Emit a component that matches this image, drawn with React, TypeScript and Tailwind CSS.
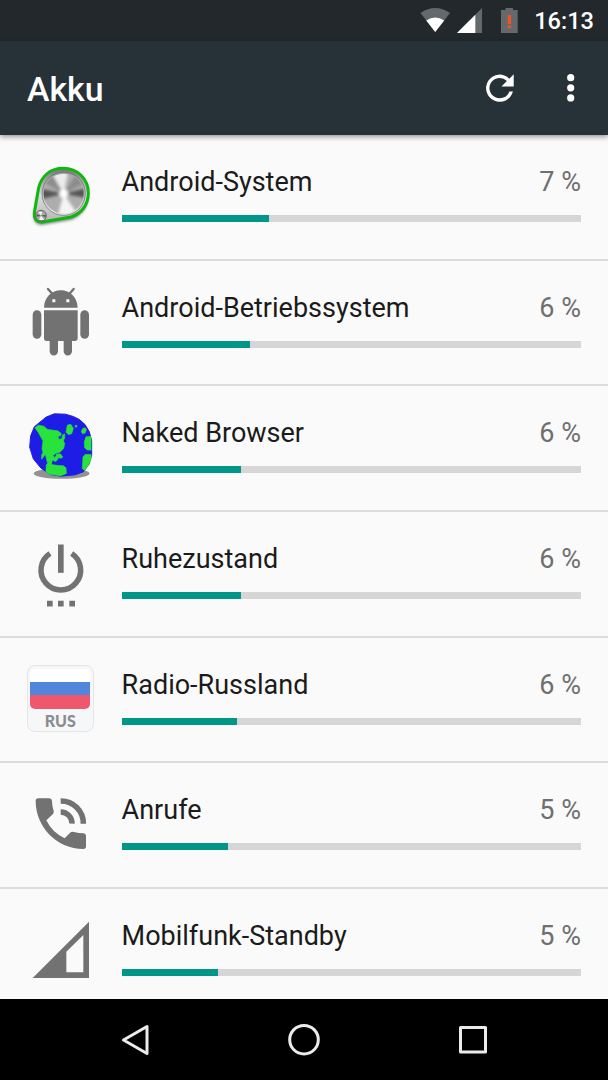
import type { ReactNode } from "react";

const ICON_GRAY = "#727272";

function ChargeIcon() {
    return (
        <svg viewBox="21 36 204 204" className="h-[68px] w-[68px] overflow-visible">
            <defs>
                <filter id="knobShadow" x="-20%" y="-20%" width="140%" height="150%">
                    <feGaussianBlur stdDeviation="5" />
                </filter>
                <filter id="soften" x="-20%" y="-20%" width="140%" height="140%">
                    <feGaussianBlur stdDeviation="4" />
                </filter>
                <clipPath id="knobClip">
                    <circle cx="131" cy="131" r="60" />
                </clipPath>
                <linearGradient id="plate" x1="0" y1="0" x2="0" y2="1">
                    <stop offset="0" stopColor="#777" />
                    <stop offset="0.5" stopColor="#ddd" />
                    <stop offset="1" stopColor="#b5b5b5" />
                </linearGradient>
                <linearGradient id="rim" x1="0" y1="0" x2="0" y2="1">
                    <stop offset="0" stopColor="#999" />
                    <stop offset="0.5" stopColor="#bbb" />
                    <stop offset="1" stopColor="#eee" />
                </linearGradient>
            </defs>
            <path d="M56 113C66 77 92 55 129 55C174 55 205 88 205 129C205 165 184 191 153 201L66 216C48 216 41 204 43 188Z" fill="#444" opacity="0.75" transform="translate(-1 8)" filter="url(#knobShadow)" />
            <path d="M56 113C66 77 92 55 129 55C174 55 205 88 205 129C205 165 184 191 153 201L66 216C48 216 41 204 43 188Z" fill="url(#plate)" stroke="#0fb80f" strokeWidth="9" />
            <circle cx="131" cy="131" r="65" fill="url(#rim)" stroke="#666" strokeWidth="2" />
            <circle cx="131" cy="131" r="60" fill="#adadad" />
            <g clipPath="url(#knobClip)">
                <g filter="url(#soften)">
                    <path d="M131 131L60 90L90 66ZM131 131L172 66L200 96Z" fill="#8c8c8c" />
                    <path d="M131 131L92 62L146 60Z" fill="#ececec" />
                    <path d="M131 131L112 200H178Z" fill="#f4f4f4" />
                    <path d="M131 131L200 114V144ZM131 131L62 116V148Z" fill="#555" />
                    <circle cx="131" cy="131" r="13" fill="#fff" />
                </g>
            </g>
            <circle cx="63" cy="197" r="16" fill="#aaa" stroke="#666" strokeWidth="3" />
            <path d="M63 197L54 185H67ZM63 197L57 210H73Z" fill="#fff" opacity="0.85" />
            <path d="M63 197L50 193V200ZM63 197L77 194V201Z" fill="#333" opacity="0.7" />
        </svg>
    );
}

function RobotIcon() {
    return (
        <svg viewBox="21 23 204 204" className="h-[68px] w-[68px] overflow-visible" fill={ICON_GRAY}>
            <path d="M84 26L98 42M161 26L147 42" stroke={ICON_GRAY} strokeWidth="7" strokeLinecap="round" />
            <path fillRule="evenodd" d="M72 82C73 50 95 30 122.500 30C150 30 172 50 173 82ZM97 57V66H106V57ZM139 57V66H148V57Z" />
            <path d="M72 90H173V174Q173 182 165 182H156V213A12.500 12.500 0 0 1 131 213V182H114V213A12.500 12.500 0 0 1 89 213V182H80Q72 182 72 174Z" />
            <rect x="38" y="90" width="26" height="85" rx="13" />
            <rect x="181" y="90" width="26" height="85" rx="13" />
        </svg>
    );
}

function GlobeIcon() {
    return (
        <svg viewBox="21 25.5 204 204" className="h-[68px] w-[68px] overflow-visible">
            <ellipse cx="125" cy="207" rx="84" ry="16" fill="#929292" />
            <path d="M78 38L103 28L136 29L160 36L178 45L195 60L208 82L215 109L215 152L207 179L190 202L165 211L122 215L91 210L63 191L40 163L29 128L32 94L43 67Z" fill="#1d1de5" stroke="#1d1de5" strokeWidth="3" strokeLinejoin="round" />
            <g fill="#27e33b" stroke="#27e33b" strokeWidth="2" strokeLinejoin="round">
                <path d="M45 70L55 62L71 65L83 75L113 79L124 87L122 94L114 95L116 104L126 103L127 92L134 88L134 100L130 110L134 116L131 132L120 143L107 147L99 153L105 160L110 149L121 148L128 157L125 161L116 160L108 171L97 167L94 180L114 183L130 184L138 190L139 207L122 214L88 209L78 202L79 181L83 178L76 149L65 164L65 151L69 145L66 132L69 109L55 84Z" />
                <path d="M142 62L152 59L160 72L155 88L145 90L138 83Z" />
                <circle cx="168" cy="65" r="3" />
                <path d="M188 72L196 70L199 76L196 85L188 88L184 82Z" />
                <path d="M213 96V137L200 136L194 129L193 112L198 97Z" />
                <path d="M213 150V165L206 181L194 197L187 193L189 158L195 150Z" />
            </g>
        </svg>
    );
}

function PowerIcon() {
    return (
        <svg viewBox="21 27.5 204 204" className="h-[68px] w-[68px] overflow-visible" fill={ICON_GRAY}>
            <rect x="114" y="44" width="17" height="85" />
            <path d="M90 71A59.500 59.500 0 1 0 155 71" fill="none" stroke={ICON_GRAY} strokeWidth="16.500" />
            <path d="M81 213H98V230H81ZM114 213H131V230H114ZM148 213H165V230H148Z" />
        </svg>
    );
}

function RussiaIcon() {
    return (
        <div className="flex h-[67.500px] w-[67.500px] flex-col items-center rounded-[8px] border border-[#e4e6e7] bg-[#f5f7f8] pt-[3px]">
            <div className="flex h-[40px] w-[60px] flex-col overflow-hidden rounded-[5px]">
                <div className="h-[13.500px] bg-white" />
                <div className="h-[12.500px] bg-[#5087dc]" />
                <div className="flex-1 bg-[#ef586c]" />
            </div>
            <span className="mt-[2px] font-['Lato'] text-[16px] leading-[20px] font-black text-[#8b8c91]">RUS</span>
        </div>
    );
}

function CallIcon() {
    return (
        <svg viewBox="21 17 204 204" className="h-[68px] w-[68px] overflow-visible" fill={ICON_GRAY}>
            <path d="M55 42H87Q95 42 96 50Q96 65 101 80Q102 85 99 89L79 108Q97 145 134 162L152 144Q156 141 162 143Q176 147 190 147Q198 148 198 156V186Q198 194 190 194C112 194 47 129 47 50Q47 42 55 42Z" />
            <path d="M122 50A67 67 0 0 1 190 118M122 83A34 34 0 0 1 156 118" fill="none" stroke={ICON_GRAY} strokeWidth="16.500" />
        </svg>
    );
}

function CellIcon() {
    return (
        <svg viewBox="21 19 204 204" className="h-[68px] w-[68px] overflow-visible">
            <path d="M38 205L207 36V205Z" fill={ICON_GRAY} />
            <path d="M139 126L190 76V188H139Z" fill="#fafafa" />
        </svg>
    );
}

type Usage = {
    name: string;
    percent: number;
    // width of the filled part, in px of the 459px track
    fill: number;
    icon: ReactNode;
};

const usages: Usage[] = [
    { name: "Android-System", percent: 7, fill: 147, icon: <ChargeIcon /> },
    { name: "Android-Betriebssystem", percent: 6, fill: 128.5, icon: <RobotIcon /> },
    { name: "Naked Browser", percent: 6, fill: 119.5, icon: <GlobeIcon /> },
    { name: "Ruhezustand", percent: 6, fill: 119.5, icon: <PowerIcon /> },
    { name: "Radio-Russland", percent: 6, fill: 115, icon: <RussiaIcon /> },
    { name: "Anrufe", percent: 5, fill: 106, icon: <CallIcon /> },
    { name: "Mobilfunk-Standby", percent: 5, fill: 96.5, icon: <CellIcon /> },
];

function StatusBar() {
    return (
        <div className="flex h-[41px] shrink-0 items-center justify-end bg-[#22282b] pr-[14px]">
            <svg viewBox="0 0 110 41" className="h-[41px] w-[110px]">
                <path d="M12.500 13Q27 3 42 13L27.200 32Z" fill="#64696b" />
                <path d="M18.300 20.500Q27.200 14.500 36.200 20.500L27.200 32Z" fill="#fff" />
                <path d="M49 33L74 8V33Z" fill="#64696b" />
                <path d="M49 33L67.300 14.700V33Z" fill="#fff" />
                <path d="M93 10H97.500V8H105V10H109.700V33H93Z" fill="#64696b" />
                <path d="M99.700 15H103V24H99.700ZM99.700 25.500H103V28.200H99.700Z" fill="#f4511e" />
            </svg>
            <span className="ml-[16.500px] pt-[2px] text-[23.600px] leading-[39px] font-medium text-white">16:13</span>
        </div>
    );
}

function AppBar() {
    return (
        <header className="z-10 flex h-[94px] shrink-0 items-center bg-[#273238] pr-[27px] pl-[27px] shadow-[0_2px_5px_rgba(0,0,0,0.4)]">
            <h1 className="flex-1 pt-[4px] text-[33.800px] leading-[40px] font-medium text-white">Akku</h1>
            <svg viewBox="0 0 30 30" className="h-[30px] w-[30px]" aria-label="Aktualisieren">
                <path d="M24.350 5.650A13.600 13.600 0 1 0 27.900 18.400H24.300A10.200 10.200 0 1 1 21.900 7.900L16.500 13.400H28.700V1.200Z" fill="#fff" />
            </svg>
            <svg viewBox="0 0 20 30" className="ml-[46px] h-[30px] w-[20px]" fill="#fff">
                <circle cx="9.700" cy="4.700" r="3.600" />
                <circle cx="9.700" cy="14.800" r="3.600" />
                <circle cx="9.700" cy="24.900" r="3.600" />
            </svg>
        </header>
    );
}

function UsageRow({ name, percent, fill, icon }: Usage) {
    return (
        <li className="flex h-[125.670px] shrink-0 border-b-2 border-[#dcdcdc] pr-[27px] pl-[26.600px]">
            <div className="w-[95px] shrink-0 pt-[27px]">{icon}</div>
            <div className="flex-1 pt-[31px]">
                <div className="flex justify-between text-[27px] leading-[32px]">
                    <span className="text-[#1b1b1b]">{name}</span>
                    <span className="text-[#6f6f6f]">{percent} %</span>
                </div>
                <div className="mt-[17px] h-[7px] bg-[#d6d6d6]">
                    <div className="h-full bg-[#009688]" style={{ width: fill }} />
                </div>
            </div>
        </li>
    );
}

function NavBar() {
    return (
        <nav className="flex h-[81px] shrink-0 items-center justify-center gap-[129px] bg-black">
            <svg viewBox="0 0 40 40" className="h-[40px] w-[40px]" fill="none" stroke="#ebebeb" strokeWidth="3" strokeLinejoin="round">
                <path d="M8.500 20L32 6.500V33.500Z" />
            </svg>
            <svg viewBox="0 0 40 40" className="h-[40px] w-[40px]" fill="none" stroke="#ebebeb" strokeWidth="3">
                <circle cx="20" cy="19.700" r="14.300" />
            </svg>
            <svg viewBox="0 0 40 40" className="h-[40px] w-[40px]" fill="none" stroke="#ebebeb" strokeWidth="3" strokeLinejoin="round">
                <rect x="7.500" y="7.500" width="25" height="24.500" />
            </svg>
        </nav>
    );
}

export default function App() {
    return (
        <div className="flex h-[1080px] w-[608px] flex-col overflow-hidden bg-[#fafafa] font-['Roboto',sans-serif]">
            <StatusBar />
            <AppBar />
            <ul className="flex min-h-0 flex-1 flex-col overflow-hidden">
                {usages.map((usage) => (
                    <UsageRow key={usage.name} {...usage} />
                ))}
            </ul>
            <NavBar />
        </div>
    );
}
